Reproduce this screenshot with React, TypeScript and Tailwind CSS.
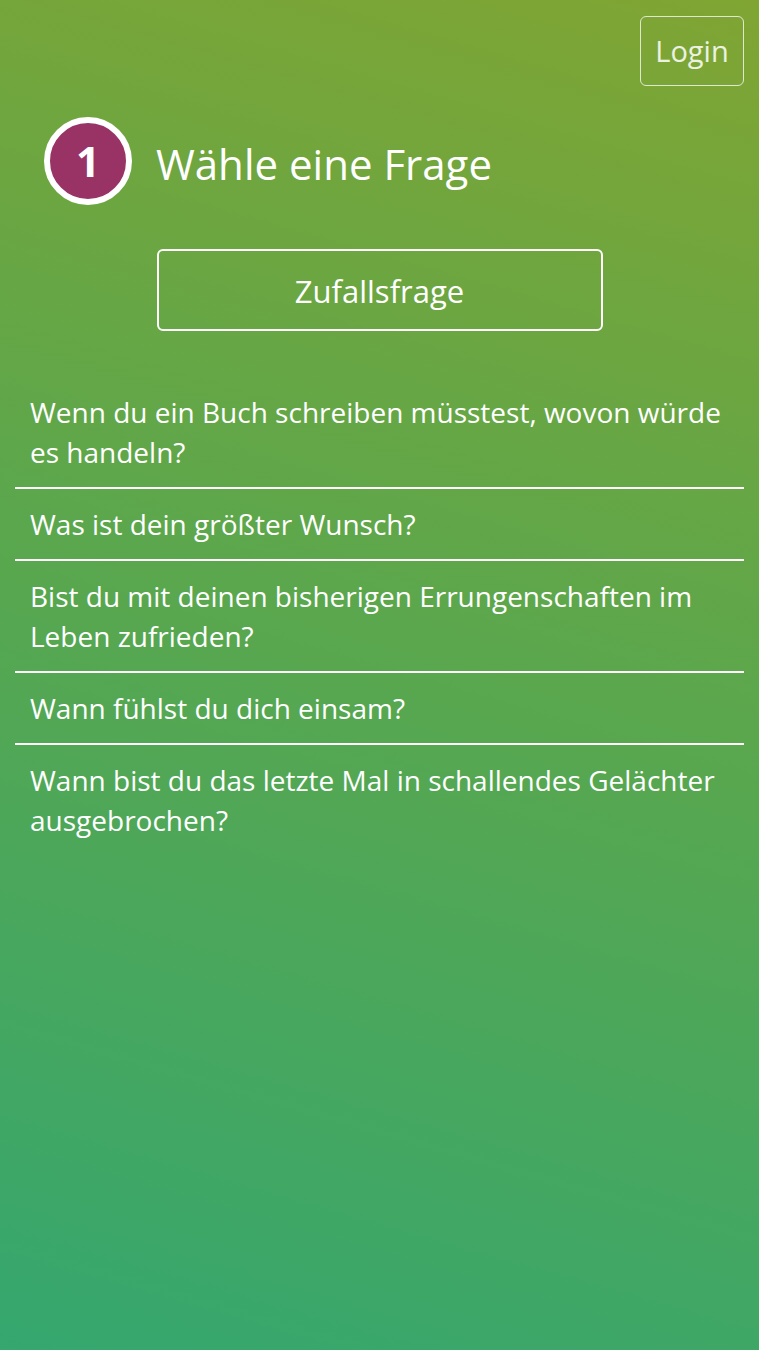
const questions = [
  "Wenn du ein Buch schreiben müsstest, wovon würde es handeln?",
  "Was ist dein größter Wunsch?",
  "Bist du mit deinen bisherigen Errungenschaften im Leben zufrieden?",
  "Wann fühlst du dich einsam?",
  "Wann bist du das letzte Mal in schallendes Gelächter ausgebrochen?",
];

const App = () => {
  return (
    <div className="min-h-[1350px] w-full bg-linear-[196deg] from-[#80a533] via-[#58a74f] to-[#35a76f] font-['Open_Sans',sans-serif] text-white">
      <div className="flex justify-end px-[15px] pt-4">
        <button className="h-[70px] w-[104px] rounded-md border-[1.5px] border-white/75 text-[29px] text-white/85">
          Login
        </button>
      </div>

      <div className="mt-[31px] flex items-center gap-[24px] pl-11">
        <div className="flex h-[88px] w-[88px] items-center justify-center rounded-full border-[6px] border-white bg-[#993366]">
          <span className="text-[42px] font-bold leading-none">1</span>
        </div>
        <h1 className="mt-[5px] text-[42px] leading-none">Wähle eine Frage</h1>
      </div>

      <div className="mt-[44px] flex justify-center">
        <button className="h-[82px] w-[446px] rounded-md border-2 border-white pt-[3px] text-[31px]">
          Zufallsfrage
        </button>
      </div>

      <ul className="mx-[15px] mt-[46px]">
        {questions.map((q, i) => (
          <li
            key={q}
            className={`px-[15px] py-[15px] text-[28px] leading-[40px] ${
              i < questions.length - 1 ? "border-b-2 border-white" : ""
            }`}
          >
            {q}
          </li>
        ))}
      </ul>
    </div>
  );
};

export default App;
